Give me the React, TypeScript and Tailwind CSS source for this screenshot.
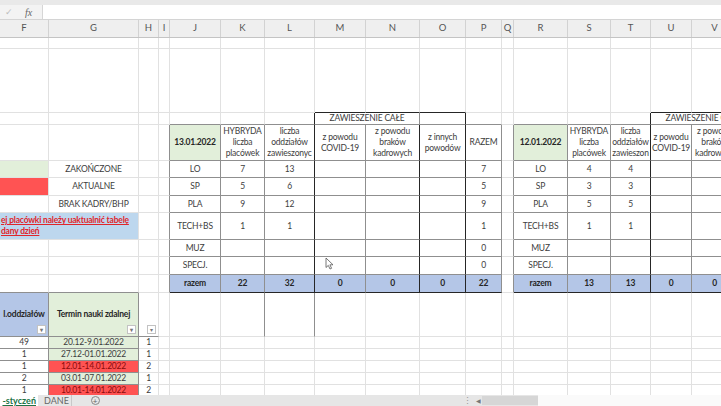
import type { ReactNode } from 'react'
import clsx from 'clsx'

type B = 'l' | 'd' | 'k'
type Bg = 'g' | 'red' | 'blue' | 'note' | 'none'

interface Cell {
  t?: ReactNode
  span?: 1 | 2
  bg?: Bg
  r?: B
  b?: B
  bold?: boolean
  tone?: 'red' | 'note' | 'dark'
  filter?: boolean
}

const BR: Record<B, string> = { l: 'border-r-[#e1e1e1]', d: 'border-r-[#8f8f8f]', k: 'border-r-[#262626]' }
const BB: Record<B, string> = { l: 'border-b-[#e1e1e1]', d: 'border-b-[#8f8f8f]', k: 'border-b-[#262626]' }
const BG: Record<Bg, string> = {
  g: 'bg-[#e2efda]',
  red: 'bg-[#ff5353]',
  blue: 'bg-[#b4c6e7]',
  note: 'bg-[#bdd7ee]',
  none: 'bg-white',
}
const TONE = {
  red: 'text-[#8a0c0c]',
  note: 'text-[#e0262b] underline font-bold justify-start text-left pl-[1px] leading-[10px]',
  dark: 'text-[#262626]',
}

const COLS = ['F', 'G', 'H', 'I', 'J', 'K', 'L', 'M', 'N', 'O', 'P', 'Q', 'R', 'S', 'T', 'U', 'V', 'W']
const GRID_COLS =
  'grid-cols-[49px_90px_20px_11px_51px_44px_50px_51px_54px_46px_36px_12px_54px_43px_40px_41px_46px_60px]'

const empty = (n: number): Cell[] => Array.from({ length: n }, () => ({}))

// one row of the two daily tables (columns H..W)
function tables(
  label: string,
  k: string,
  l: string,
  p: string,
  rs: string,
  rt: string,
  b: B = 'd',
  sum = false,
): Cell[] {
  const bg: Bg = sum ? 'blue' : 'none'
  const x = { b, bg, bold: sum, tone: sum ? ('dark' as const) : undefined }
  return [
    {},
    { r: 'd' },
    { t: label, r: 'd', ...x },
    { t: k, r: 'd', ...x },
    { t: l, r: 'k', ...x },
    { t: sum ? '0' : '', r: 'd', ...x },
    { t: sum ? '0' : '', r: 'k', ...x },
    { t: sum ? '0' : '', r: 'k', ...x },
    { t: p, r: 'd', ...x },
    { r: 'd' },
    { t: label, r: 'd', ...x },
    { t: rs, r: 'd', ...x },
    { t: rt, r: 'k', ...x },
    { t: sum ? '0' : '', r: 'd', ...x },
    { t: sum ? '0' : '', r: 'd', ...x },
    {},
  ]
}

const dates: [string, string, Bg, string][] = [
  ['49', '20.12-9.01.2022', 'g', '1'],
  ['1', '27.12-01.01.2022', 'g', '1'],
  ['1', '12.01-14.01.2022', 'red', '2'],
  ['2', '03.01-07.01.2022', 'g', '1'],
  ['1', '10.01-14.01.2022', 'red', '2'],
]

const rows: Cell[][] = [
  empty(18),
  [...empty(7), { b: 'k' }, { b: 'k' }, { b: 'k' }, ...empty(5), { b: 'k' }, { b: 'k' }, {}],
  [
    ...empty(4),
    { b: 'd' },
    { b: 'd' },
    { r: 'k', b: 'd' },
    { t: 'ZAWIESZENIE CAŁE', span: 2, r: 'd', b: 'd' },
    { r: 'k', b: 'd' },
    { b: 'd' },
    {},
    { b: 'd' },
    { b: 'd' },
    { r: 'k', b: 'd' },
    { t: <span className="pl-[18px]">ZAWIESZENIE CAŁE</span>, span: 2, r: 'k', b: 'd' },
    {},
  ],
  [
    ...empty(3),
    { r: 'd' },
    { t: '13.01.2022', bg: 'g', bold: true, r: 'd', b: 'd', tone: 'dark' },
    { t: 'HYBRYDA\nliczba\nplacówek', r: 'd', b: 'd' },
    { t: 'liczba\noddziałów\nzawieszonyc', r: 'k', b: 'd' },
    { t: 'z powodu\nCOVID-19', r: 'd', b: 'd' },
    { t: 'z powodu\nbraków\nkadrowych', r: 'k', b: 'd' },
    { t: 'z innych\npowodów', r: 'k', b: 'd' },
    { t: 'RAZEM', r: 'd', b: 'd' },
    { r: 'd' },
    { t: '12.01.2022', bg: 'g', bold: true, r: 'd', b: 'd', tone: 'dark' },
    { t: 'HYBRYDA\nliczba\nplacówek', r: 'd', b: 'd' },
    { t: 'liczba\noddziałów\nzawieszon', r: 'k', b: 'd' },
    { t: 'z powodu\nCOVID-19', r: 'd', b: 'd' },
    { t: 'z powodu\nbraków\nkadrowych', r: 'd', b: 'd' },
    {},
  ],
  [{ bg: 'g' }, { t: 'ZAKOŃCZONE' }, ...tables('LO', '7', '13', '7', '4', '4')],
  [{ bg: 'red' }, { t: 'AKTUALNE' }, ...tables('SP', '5', '6', '5', '3', '3')],
  [{}, { t: 'BRAK KADRY/BHP' }, ...tables('PLA', '9', '12', '9', '5', '5')],
  [
    {
      t: 'ej placówki należy uaktualnić tabelę\ndany dzień',
      span: 2,
      bg: 'note',
      tone: 'note',
    },
    ...tables('TECH+BS', '1', '1', '1', '1', '1'),
  ],
  [{}, {}, ...tables('MUZ', '', '', '0', '', '')],
  [{}, {}, ...tables('SPECJ.', '', '', '0', '', '')],
  [{ b: 'd' }, { b: 'd' }, ...tables('razem', '22', '32', '22', '13', '13', 'k', true)],
  [
    { t: 'l.oddziałów', bg: 'blue', bold: true, r: 'd', b: 'd', tone: 'dark', filter: true },
    { t: 'Termin nauki zdalnej', bg: 'g', bold: true, r: 'd', b: 'd', tone: 'dark', filter: true },
    { b: 'd', filter: true },
    {},
    {},
    { r: 'd' },
    { r: 'd' },
    ...empty(11),
  ],
  ...dates.map(([n, d, bg, h]): Cell[] => [
    { t: n, r: 'd', b: 'd' },
    { t: d, bg, r: 'd', b: 'd', tone: bg === 'red' ? 'red' : undefined },
    { t: h },
    ...empty(15),
  ]),
]

function SheetCell({ c }: { c: Cell }) {
  return (
    <div
      className={clsx(
        'relative flex items-center justify-center overflow-hidden whitespace-pre border-r border-b text-center text-[8.5px] leading-[11px] tracking-[-0.2px] text-[#3d3d3d]',
        BR[c.r ?? 'l'],
        BB[c.b ?? 'l'],
        BG[c.bg ?? 'none'],
        c.span === 2 && 'col-span-2',
        c.bold && 'font-bold',
        c.tone && TONE[c.tone],
      )}
    >
      {c.t}
      {c.filter && (
        <span className="absolute right-[2px] bottom-[2px] flex h-[9px] w-[9px] items-center justify-center border border-[#c2c2c2] bg-white text-[6px] leading-none text-[#777]">
          ▾
        </span>
      )}
    </div>
  )
}

function Cursor() {
  return (
    <svg className="absolute left-[325px] top-[219px] h-[13px] w-[9px]" viewBox="0 0 9 13">
      <path d="M1 1 L1 10.5 L3.3 8.4 L5 12 L6.6 11.3 L4.9 7.8 L8 7.8 Z" fill="white" stroke="#555" strokeWidth="0.8" />
    </svg>
  )
}

export default function App() {
  return (
    <div className="flex h-[406px] w-[721px] flex-col overflow-hidden bg-white font-['Lato',sans-serif] text-[9px]">
      <div className="h-[5px] bg-[#e9e9e9]" />
      {/* formula bar */}
      <div className="flex h-[15px] border-b border-[#d4d4d4] bg-[#f3f3f3]">
        <div className="flex w-[42px] items-center gap-[12px] pl-[5px]">
          <span className="text-[9px] text-[#bdbdbd]">✓</span>
          <span className="font-['Liberation_Serif',serif] text-[10px] italic text-[#666]">fx</span>
        </div>
        <div className="flex-1 border-l border-[#d6d6d6] bg-white" />
      </div>
      {/* column letters */}
      <div className={clsx('grid h-[18px] shrink-0 border-b border-[#c4c4c4] bg-[#efefef]', GRID_COLS)}>
        {COLS.map((c) => (
          <div key={c} className="flex items-center justify-center border-r border-[#d2d2d2] text-[9.5px] text-[#555]">
            {c}
          </div>
        ))}
      </div>
      {/* sheet */}
      <div className="relative min-h-0 flex-1 overflow-hidden">
        <div
          className={clsx(
            'grid grid-rows-[11px_64px_12px_36px_17px_18px_17px_27px_17px_18px_18px_44px_12px_12px_12px_12px_12px]',
            GRID_COLS,
          )}
        >
          {rows.flatMap((row, i) => row.map((c, j) => <SheetCell key={`${i}-${j}`} c={c} />))}
        </div>
        <Cursor />
      </div>
      {/* sheet tabs + scroll */}
      <div className="flex h-[11px] shrink-0 items-stretch bg-[#e6e6e6] text-[9px] leading-[11px]">
        <div className="w-[38px] bg-white pr-[2px] text-right font-bold text-[#217346] underline">-styczeń</div>
        <div className="w-[34px] border-r border-[#c8c8c8] pl-[6px] text-left text-[#666]">DANE</div>
        <div className="flex w-[46px] items-center justify-center">
          <span className="flex h-[9px] w-[9px] items-center justify-center rounded-full border border-[#888] text-[8px] leading-none text-[#666]">
            +
          </span>
        </div>
        <div className="flex-1" />
        <div className="flex w-[14px] items-center justify-center text-[#999]">⋮</div>
        <div className="flex w-[8px] items-center justify-center text-[6px] text-[#777]">◀</div>
        <div className="my-[1px] w-[56px] bg-[#d6d6d6]" />
        <div className="w-[183px] bg-[#fafafa]" />
      </div>
    </div>
  )
}
